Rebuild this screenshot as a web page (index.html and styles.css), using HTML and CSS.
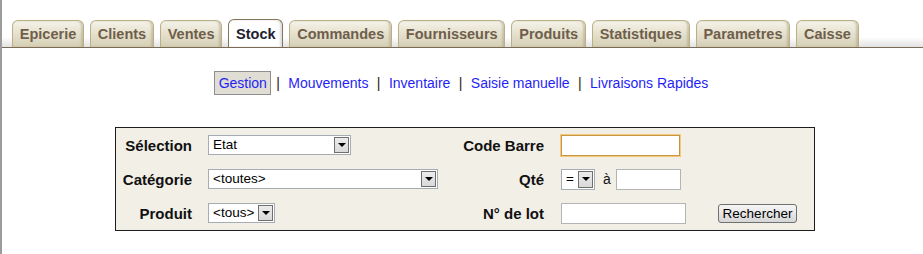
FILE: index.html
```html
<!DOCTYPE html>
<html lang="fr">
<head>
<meta charset="utf-8">
<title>Stock - Gestion</title>
<link rel="stylesheet" href="styles.css">
</head>
<body>
<div class="page">
  <div class="tabbar">
    <ul class="tabs">
      <li class="tab">Epicerie</li>
      <li class="tab">Clients</li>
      <li class="tab">Ventes</li>
      <li class="tab active">Stock</li>
      <li class="tab">Commandes</li>
      <li class="tab">Fournisseurs</li>
      <li class="tab">Produits</li>
      <li class="tab">Statistiques</li>
      <li class="tab">Parametres</li>
      <li class="tab">Caisse</li>
    </ul>
  </div>

  <nav class="subnav">
    <a class="sublink current">Gestion</a> <span class="sep">|</span> <a class="sublink">Mouvements</a> <span class="sep">|</span> <a class="sublink">Inventaire</a> <span class="sep">|</span> <a class="sublink">Saisie manuelle</a> <span class="sep">|</span> <a class="sublink">Livraisons Rapides</a>
  </nav>

  <div class="panel">
    <div class="lbl lbl-left">Sélection</div>
    <div class="cell"><div class="sel sel-selection"><span class="sel-text">Etat</span><span class="arrow"></span></div></div>
    <div class="lbl lbl-right">Code Barre</div>
    <div class="cell"><div class="inp inp-code focus"></div></div>
    <div class="cell"></div>

    <div class="lbl lbl-left">Catégorie</div>
    <div class="cell"><div class="sel sel-cat"><span class="sel-text">&lt;toutes&gt;</span><span class="arrow"></span></div></div>
    <div class="lbl lbl-right">Qté</div>
    <div class="cell qty">
      <div class="sel sel-op"><span class="sel-text">=</span><span class="arrow"></span></div>
      <span class="a">à</span>
      <div class="inp inp-qty"></div>
    </div>
    <div class="cell"></div>

    <div class="lbl lbl-left">Produit</div>
    <div class="cell"><div class="sel sel-prod"><span class="sel-text">&lt;tous&gt;</span><span class="arrow"></span></div></div>
    <div class="lbl lbl-right">N° de lot</div>
    <div class="cell"><div class="inp inp-lot"></div></div>
    <div class="cell"><button class="btn" type="button">Rechercher</button></div>
  </div>
</div>
</body>
</html>
```

FILE: styles.css
```css
html, body {
  margin: 0;
  padding: 0;
  background: #ffffff;
}

body {
  font-family: "Liberation Sans", Arial, sans-serif;
  color: #111;
}

.page {
  height: 254px;
  border-left: 2px solid #9b9b9b;
  box-sizing: border-box;
}

/* ---------- tabs ---------- */
.tabbar {
  height: 47px;
  border-bottom: 1px solid #7b6a55;
  background: linear-gradient(to bottom, #ffffff 0, #ffffff 37px, #e2e2e2 47px);
  box-sizing: content-box;
}

.tabs {
  list-style: none;
  margin: 0;
  padding: 0 0 0 10px;
  height: 47px;
  display: flex;
  align-items: flex-end;
  gap: 6px;
}

.tab {
  height: 26px;
  line-height: 27px;
  padding: 0 6.8px;
  border: 1px solid #bcae86;
  border-bottom: none;
  border-radius: 6px 6px 0 0;
  background: linear-gradient(to bottom, #f5f3ea 0%, #e8e4d2 40%, #d5cfb5 100%);
  box-shadow: inset -2px 0 2px rgba(150, 135, 95, 0.35);
  font-size: 14.5px;
  font-weight: bold;
  color: #6f5e4b;
  white-space: nowrap;
}

.tab.active {
  height: 27px;
  line-height: 28px;
  background: #ffffff;
  border-color: #857458;
  box-shadow: inset -2px 0 2px rgba(120, 120, 120, 0.25);
  color: #1c2130;
}

/* ---------- sub navigation ---------- */
.subnav {
  margin-top: 23px;
  height: 24px;
  line-height: 24px;
  text-align: center;
  font-size: 14px;
  white-space: nowrap;
}

.sublink {
  color: #1f1ff5;
  padding: 0 3px;
  text-decoration: none;
}

.sublink.current {
  display: inline-block;
  line-height: 16px;
  padding: 3px 3px 3px 4px;
  background: #dfddd4;
  border: 1px solid #8e8e8e;
  vertical-align: top;
}

.sep {
  color: #2a2010;
  margin: 0 1.5px;
}

/* ---------- search panel ---------- */
.panel {
  margin: 32px 0 0 113px;
  width: 700px;
  height: 104px;
  box-sizing: border-box;
  border: 1px solid #1e1e1e;
  background: #f2efe7;
  display: grid;
  grid-template-columns: 92px 240px 113px 157px 1fr;
  grid-template-rows: 34px 34px 34px;
  align-items: center;
}

.lbl {
  font-size: 15px;
  font-weight: bold;
  color: #111;
  text-align: right;
  white-space: nowrap;
}

.lbl-left {
  padding-right: 16px;
}

.lbl-right {
  padding-right: 17px;
}

.cell {
  display: flex;
  align-items: center;
}

.sel {
  position: relative;
  height: 20px;
  box-sizing: border-box;
  border: 1px solid #a5acb2;
  background: #fff;
  font-size: 13.5px;
  line-height: 18px;
  color: #000;
}

.sel-text {
  padding-left: 4px;
  white-space: nowrap;
}

.arrow {
  position: absolute;
  top: 1px;
  right: 1px;
  width: 15px;
  height: 16px;
  box-sizing: border-box;
  border: 1px solid #6f6f6f;
  background: linear-gradient(to bottom, #ececec, #d9d9d9);
}

.arrow::after {
  content: "";
  position: absolute;
  left: 3px;
  top: 5px;
  border-left: 4px solid transparent;
  border-right: 4px solid transparent;
  border-top: 4px solid #000;
}

.sel-selection { width: 143px; }
.sel-cat { width: 230px; }
.sel-prod { width: 67px; }
.sel-op { width: 34px; height: 21px; }
.sel-op .arrow { height: 17px; }

.inp {
  height: 21px;
  box-sizing: border-box;
  border: 1px solid #b4b4b4;
  background: #fff;
}

.inp-code {
  width: 119px;
}

.inp.focus {
  border: 1px solid #c8963c;
  box-shadow: 0 0 0 1px #f2c982;
}

.inp-qty { width: 65px; }
.inp-lot { width: 125px; }

.a {
  font-size: 14px;
  margin: 0 5px 0 8px;
  color: #111;
}

.btn {
  width: 79px;
  height: 19px;
  padding: 0;
  margin: 0;
  border: 1px solid #707070;
  border-radius: 3px;
  background: linear-gradient(to bottom, #f6f6f6 0%, #e6e6e6 50%, #d6d6d6 100%);
  font-family: "Liberation Sans", Arial, sans-serif;
  font-size: 13.5px;
  color: #000;
  line-height: 17px;
}
```
